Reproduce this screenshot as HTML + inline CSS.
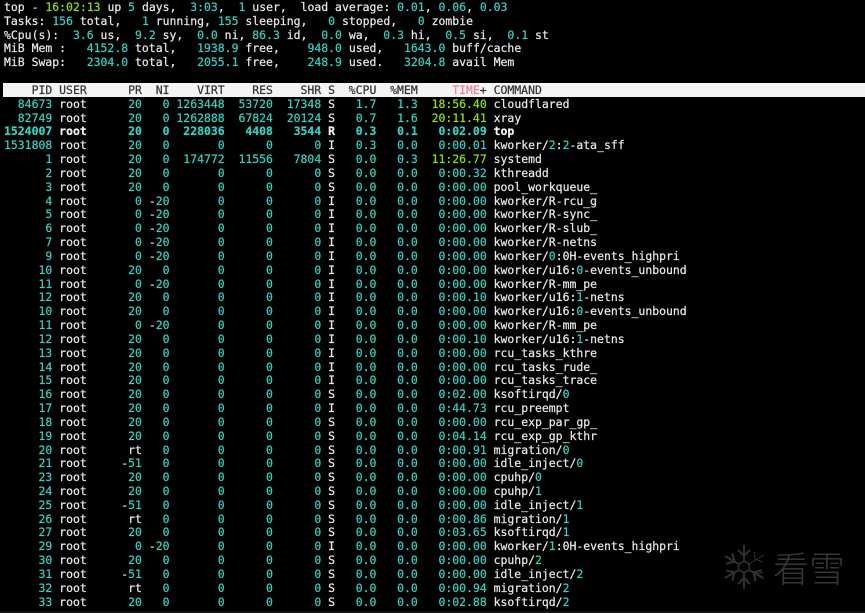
<!DOCTYPE html>
<html><head><meta charset="utf-8"><style>
html,body{margin:0;padding:0;background:#000;width:865px;height:613px;overflow:hidden}
#bar{position:absolute;left:3px;top:83px;width:862px;height:14px;background:#f4f4f4}
pre{position:absolute;left:4px;top:1px;margin:0;font:11.46px/13.83px "DejaVu Sans Mono",monospace;color:#36cfc0;-webkit-text-stroke:.22px;filter:blur(.25px);white-space:pre}
i{font-style:normal;color:#e8e8e8}
u{text-decoration:none;color:#8fe000}
.h{color:#333}.p{color:#e8829f}
b i{color:#f4f4f4}
#wm{position:absolute;left:773px;top:546px;font:200 36px/42px "Noto Sans CJK SC",sans-serif;color:#363636;white-space:nowrap}
#bot{position:absolute;left:0;top:611px;width:865px;height:2px;background:#141414}
svg{position:absolute;left:720px;top:543px}
</style></head><body>
<div id="bar"></div>
<pre><i>top - </i><u>16:02:13</u><i> up </i>5<i> days,  </i>3:03<i>,  </i>1<i> user,  load average: </i>0.01<i>, </i>0.06<i>, </i>0.03
<i>Tasks: </i>156<i> total,   </i>1<i> running, </i>155<i> sleeping,   </i>0<i> stopped,   </i>0<i> zombie</i>
<i>%Cpu(s): </i> 3.6<i> us,  </i>9.2<i> sy,  </i>0.0<i> ni, </i>86.3<i> id,  </i>0.0<i> wa,  </i>0.3<i> hi,  </i>0.5<i> si,  </i>0.1<i> st</i>
<i>MiB Mem :   </i>4152.8<i> total,   </i>1938.9<i> free,    </i>948.0<i> used,   </i>1643.0<i> buff/cache</i>
<i>MiB Swap:   </i>2304.0<i> total,   </i>2055.1<i> free,    </i>248.9<i> used.   </i>3204.8<i> avail Mem</i>

<span class="h">    PID USER      PR  NI    VIRT    RES    SHR S  %CPU  %MEM     </span><span class="p">TIME</span><span class="h">+ COMMAND</span>
  84673 <i>root</i>      20   0 1263448  53720  17348 <i>S</i>   1.7   1.3  <u>18:56.40</u> <i>cloudflared</i>
  82749 <i>root</i>      20   0 1262888  67824  20124 <i>S</i>   0.7   1.6  <u>20:11.41</u> <i>xray</i>
<b>1524007 <i>root</i>      20   0  228036   4408   3544 <i>R</i>   0.3   0.1   0:02.09 <i>top</i></b>
1531808 <i>root</i>      20   0       0      0      0 <i>I</i>   0.3   0.0   0:00.01 <i>kworker/</i>2<i>:</i>2<i>-ata_sff</i>
      1 <i>root</i>      20   0  174772  11556   7804 <i>S</i>   0.0   0.3  <u>11:26.77</u> <i>systemd</i>
      2 <i>root</i>      20   0       0      0      0 <i>S</i>   0.0   0.0   0:00.32 <i>kthreadd</i>
      3 <i>root</i>      20   0       0      0      0 <i>S</i>   0.0   0.0   0:00.00 <i>pool_workqueue_</i>
      4 <i>root</i>       0 <i>-</i>20       0      0      0 <i>I</i>   0.0   0.0   0:00.00 <i>kworker/R-rcu_g</i>
      5 <i>root</i>       0 <i>-</i>20       0      0      0 <i>I</i>   0.0   0.0   0:00.00 <i>kworker/R-sync_</i>
      6 <i>root</i>       0 <i>-</i>20       0      0      0 <i>I</i>   0.0   0.0   0:00.00 <i>kworker/R-slub_</i>
      7 <i>root</i>       0 <i>-</i>20       0      0      0 <i>I</i>   0.0   0.0   0:00.00 <i>kworker/R-netns</i>
      9 <i>root</i>       0 <i>-</i>20       0      0      0 <i>I</i>   0.0   0.0   0:00.00 <i>kworker/</i>0<i>:0H-events_highpri</i>
     10 <i>root</i>      20   0       0      0      0 <i>I</i>   0.0   0.0   0:00.00 <i>kworker/u16:</i>0<i>-events_unbound</i>
     11 <i>root</i>       0 <i>-</i>20       0      0      0 <i>I</i>   0.0   0.0   0:00.00 <i>kworker/R-mm_pe</i>
     12 <i>root</i>      20   0       0      0      0 <i>I</i>   0.0   0.0   0:00.10 <i>kworker/u16:</i>1<i>-netns</i>
     10 <i>root</i>      20   0       0      0      0 <i>I</i>   0.0   0.0   0:00.00 <i>kworker/u16:</i>0<i>-events_unbound</i>
     11 <i>root</i>       0 <i>-</i>20       0      0      0 <i>I</i>   0.0   0.0   0:00.00 <i>kworker/R-mm_pe</i>
     12 <i>root</i>      20   0       0      0      0 <i>I</i>   0.0   0.0   0:00.10 <i>kworker/u16:</i>1<i>-netns</i>
     13 <i>root</i>      20   0       0      0      0 <i>I</i>   0.0   0.0   0:00.00 <i>rcu_tasks_kthre</i>
     14 <i>root</i>      20   0       0      0      0 <i>I</i>   0.0   0.0   0:00.00 <i>rcu_tasks_rude_</i>
     15 <i>root</i>      20   0       0      0      0 <i>I</i>   0.0   0.0   0:00.00 <i>rcu_tasks_trace</i>
     16 <i>root</i>      20   0       0      0      0 <i>S</i>   0.0   0.0   0:02.00 <i>ksoftirqd/</i>0
     17 <i>root</i>      20   0       0      0      0 <i>I</i>   0.0   0.0   0:44.73 <i>rcu_preempt</i>
     18 <i>root</i>      20   0       0      0      0 <i>S</i>   0.0   0.0   0:00.00 <i>rcu_exp_par_gp_</i>
     19 <i>root</i>      20   0       0      0      0 <i>S</i>   0.0   0.0   0:04.14 <i>rcu_exp_gp_kthr</i>
     20 <i>root</i>      <i>rt</i>   0       0      0      0 <i>S</i>   0.0   0.0   0:00.91 <i>migration/</i>0
     21 <i>root</i>     <i>-</i>51   0       0      0      0 <i>S</i>   0.0   0.0   0:00.00 <i>idle_inject/</i>0
     23 <i>root</i>      20   0       0      0      0 <i>S</i>   0.0   0.0   0:00.00 <i>cpuhp/</i>0
     24 <i>root</i>      20   0       0      0      0 <i>S</i>   0.0   0.0   0:00.00 <i>cpuhp/</i>1
     25 <i>root</i>     <i>-</i>51   0       0      0      0 <i>S</i>   0.0   0.0   0:00.00 <i>idle_inject/</i>1
     26 <i>root</i>      <i>rt</i>   0       0      0      0 <i>S</i>   0.0   0.0   0:00.86 <i>migration/</i>1
     27 <i>root</i>      20   0       0      0      0 <i>S</i>   0.0   0.0   0:03.65 <i>ksoftirqd/</i>1
     29 <i>root</i>       0 <i>-</i>20       0      0      0 <i>I</i>   0.0   0.0   0:00.00 <i>kworker/</i>1<i>:0H-events_highpri</i>
     30 <i>root</i>      20   0       0      0      0 <i>S</i>   0.0   0.0   0:00.00 <i>cpuhp/</i>2
     31 <i>root</i>     <i>-</i>51   0       0      0      0 <i>S</i>   0.0   0.0   0:00.00 <i>idle_inject/</i>2
     32 <i>root</i>      <i>rt</i>   0       0      0      0 <i>S</i>   0.0   0.0   0:00.94 <i>migration/</i>2
     33 <i>root</i>      20   0       0      0      0 <i>S</i>   0.0   0.0   0:02.88 <i>ksoftirqd/</i>2</pre>
<svg width="48" height="48" viewBox="-24 -24 48 48" fill="none" stroke="#303030" stroke-width="2.1">
<defs><g id="a"><path d="M0-6V-22M-6-17L0-11L6-17"/></g></defs>
<use href="#a"/><use href="#a" transform="rotate(120)"/><use href="#a" transform="rotate(180)"/><use href="#a" transform="rotate(240)"/><use href="#a" transform="rotate(300)"/>
<path d="M5-3L20-12M5 3L20 12M10-15L11-8L19-5M10 15L11 8L19 5" stroke-width="1"/>
<path d="M0-6L5.2-3V3L0 6L-5.2 3V-3Z" stroke-width="1.6"/>
</svg>
<div id="wm">看雪</div>
<div id="bot"></div>
</body></html>
